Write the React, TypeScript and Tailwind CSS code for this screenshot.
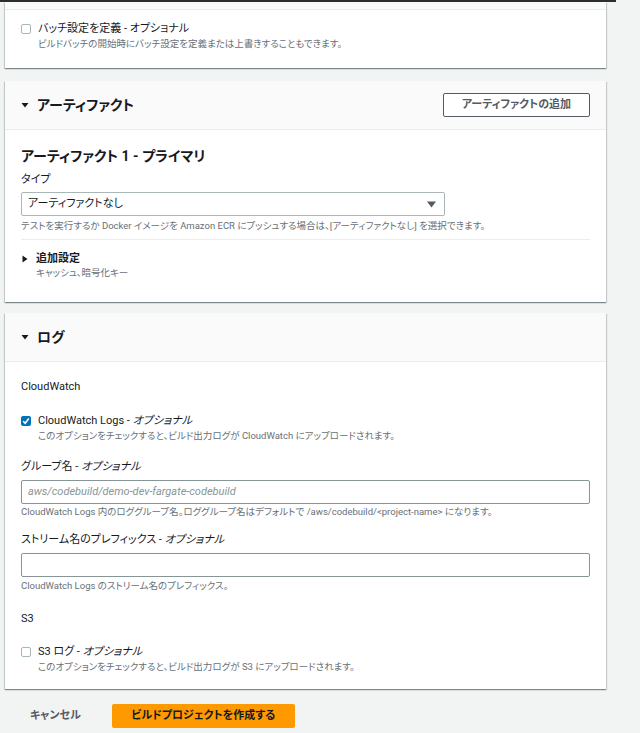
import React from "react";

const font = "[font-family:Roboto,'Noto_Sans_CJK_JP',sans-serif] [font-feature-settings:'palt']";

function Caret({ open = true }: { open?: boolean }) {
  return open ? (
    <svg width="8" height="8" viewBox="0 0 8 8" className="shrink-0" aria-hidden>
      <path d="M0.5 2 L7.5 2 L4 6.5 Z" fill="#16191f" />
    </svg>
  ) : (
    <svg width="8" height="8" viewBox="0 0 8 8" className="shrink-0" aria-hidden>
      <path d="M1.5 0.5 L6.5 4 L1.5 7.5 Z" fill="#16191f" />
    </svg>
  );
}

function Checkbox({ checked = false }: { checked?: boolean }) {
  if (checked) {
    return (
      <span className="mt-[3px] flex size-[10px] shrink-0 items-center justify-center rounded-[2px] bg-[#0073bb]">
        <svg width="8" height="8" viewBox="0 0 8 8" aria-hidden>
          <path d="M1.2 4.2 L3.2 6.2 L6.8 1.6" fill="none" stroke="#fff" strokeWidth="1.6" />
        </svg>
      </span>
    );
  }
  return <span className="mt-[3px] block size-[10px] shrink-0 rounded-[2px] border border-[#aab7b8] bg-white" />;
}

function CheckRow({
  checked,
  label,
  desc,
  className = "",
}: {
  checked?: boolean;
  label: React.ReactNode;
  desc: string;
  className?: string;
}) {
  return (
    <div className={`flex gap-[7px] ${className}`}>
      <Checkbox checked={checked} />
      <div>
        <div className="text-[11px] leading-[16px] text-[#16191f]">{label}</div>
        <div className="text-[9.5px] leading-[14px] text-[#687078]">{desc}</div>
      </div>
    </div>
  );
}

const panel =
  "bg-white shadow-[0_1px_1px_0_rgba(0,28,36,0.3),1px_1px_1px_0_rgba(0,28,36,0.15),-1px_1px_1px_0_rgba(0,28,36,0.15)]";

function PanelHeader({ title, action }: { title: string; action?: React.ReactNode }) {
  return (
    <div className="flex h-[49px] items-center justify-between border-b border-[#eaeded] bg-[#fafafa] pl-4 pr-4">
      <div className="flex items-center gap-[8px]">
        <Caret />
        <h2 className="text-[14px] font-bold leading-[20px] text-[#16191f]">{title}</h2>
      </div>
      {action}
    </div>
  );
}

export default function App() {
  return (
    <div className={`h-[733px] w-[640px] overflow-hidden bg-[#f2f3f3] ${font}`}>
      <div className="h-[2px] w-[616px] bg-[#2a2e33]" />
      <div className="w-[606px] pl-[5px]">
        {/* batch panel (scrolled) */}
        <div className={panel}>
          <div className="h-[8px] border-b border-[#eaeded] bg-[#fafafa]" />
          <div className="px-4 pb-[17px] pt-[11px]">
            <CheckRow
              label="バッチ設定を定義 - オプショナル"
              desc="ビルドバッチの開始時にバッチ設定を定義または上書きすることもできます。"
            />
          </div>
        </div>

        {/* artifacts */}
        <div className={`${panel} mt-[13px]`}>
          <PanelHeader
            title="アーティファクト"
            action={
              <button className="flex h-[24px] w-[147px] items-center justify-center rounded-[2px] border border-[#545b64] bg-white text-[11px] font-bold text-[#545b64]">
                アーティファクトの追加
              </button>
            }
          />
          <div className="px-4 pb-[22px] pt-[16px]">
            <h3 className="text-[14px] font-bold leading-[20px] text-[#16191f]">アーティファクト 1 - プライマリ</h3>
            <div className="mt-[6px] text-[11px] leading-[16px] text-[#16191f]">タイプ</div>
            <div className="mt-[4px] flex h-[24px] w-[424px] items-center justify-between rounded-[2px] border border-[#aab7b8] pl-[6px] pr-[8px]">
              <span className="text-[11px] text-[#16191f]">アーティファクトなし</span>
              <svg width="9" height="7" viewBox="0 0 9 7" aria-hidden>
                <path d="M0 0.5 L9 0.5 L4.5 6.5 Z" fill="#545b64" />
              </svg>
            </div>
            <div className="mt-[3px] text-[9.5px] leading-[14px] text-[#687078]">
              テストを実行するか Docker イメージを Amazon ECR にプッシュする場合は、[アーティファクトなし] を選択できます。
            </div>
            <div className="mt-[6px] h-px bg-[#eaeded]" />
            <div className="mt-[12px] flex items-center gap-[7px]">
              <Caret open={false} />
              <span className="text-[11px] font-bold leading-[14px] text-[#16191f]">追加設定</span>
            </div>
            <div className="pl-[15px] text-[9.5px] leading-[14px] text-[#687078]">キャッシュ、暗号化キー</div>
          </div>
        </div>

        {/* logs */}
        <div className={`${panel} mt-[11px]`}>
          <PanelHeader title="ログ" />
          <div className="px-4 pb-[15px] pt-[17px]">
            <div className="text-[11px] leading-[16px] text-[#16191f]">CloudWatch</div>
            <CheckRow
              className="mt-[18px]"
              checked
              label={
                <>
                  CloudWatch Logs - <i>オプショナル</i>
                </>
              }
              desc="このオプションをチェックすると、ビルド出力ログが CloudWatch にアップロードされます。"
            />
            <div className="mt-[16px] text-[11px] leading-[16px] text-[#16191f]">
              グループ名 - <i>オプショナル</i>
            </div>
            <div className="mt-[5px] flex h-[24px] items-center rounded-[2px] border border-[#879596] pl-[6px]">
              <span className="text-[11px] italic text-[#879596]">aws/codebuild/demo-dev-fargate-codebuild</span>
            </div>
            <div className="mt-[1px] text-[9.5px] leading-[14px] text-[#687078]">
              CloudWatch Logs 内のロググループ名。ロググループ名はデフォルトで /aws/codebuild/&lt;project-name&gt; になります。
            </div>
            <div className="mt-[13px] text-[11px] leading-[16px] text-[#16191f]">
              ストリーム名のプレフィックス - <i>オプショナル</i>
            </div>
            <div className="mt-[5px] h-[24px] rounded-[2px] border border-[#879596]" />
            <div className="mt-[2px] text-[9.5px] leading-[14px] text-[#687078]">
              CloudWatch Logs のストリーム名のプレフィックス。
            </div>
            <div className="mt-[18px] text-[11px] leading-[16px] text-[#16191f]">S3</div>
            <CheckRow
              className="mt-[17px]"
              label={
                <>
                  S3 ログ - <i>オプショナル</i>
                </>
              }
              desc="このオプションをチェックすると、ビルド出力ログが S3 にアップロードされます。"
            />
          </div>
        </div>

        {/* footer */}
        <div className="mt-[15px] flex items-center">
          <button className="ml-[25px] text-[11px] font-bold text-[#545b64]">キャンセル</button>
          <button className="ml-[31px] flex h-[24px] w-[183px] items-center justify-center rounded-[2px] bg-[#ff9900] text-[11px] font-bold text-[#16191f]">
            ビルドプロジェクトを作成する
          </button>
        </div>
      </div>
    </div>
  );
}
